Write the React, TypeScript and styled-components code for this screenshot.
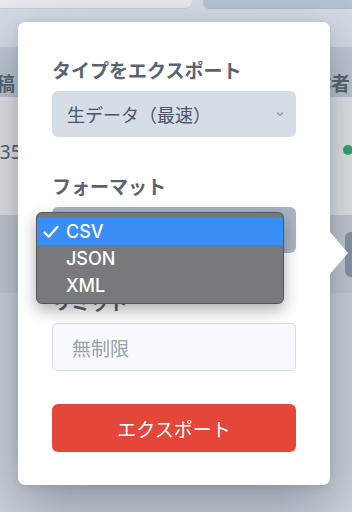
import React from "react";
import styled, { createGlobalStyle } from "styled-components";

const Global = createGlobalStyle`
  html, body { margin: 0; padding: 0; }
  body {
    background: #ccd3db;
    font-family: "Noto Sans CJK JP", "Noto Sans", sans-serif;
    overflow: hidden;
  }
`;

const Page = styled.div`
  position: relative;
  width: 352px;
  height: 512px;
  overflow: hidden;
  background: #cbd2da;
  display: flex;
  flex-direction: column;
`;

const Toolbar = styled.div`
  height: 9px;
  display: flex;
  align-items: flex-end;
  gap: 11px;
  overflow: hidden;
  background: #d3dbe3;
`;

const ToolButton = styled.div<{ $tone: "light" | "blue"; $w: number }>`
  flex: 0 0 ${(p) => p.$w}px;
  height: 40px;
  border-radius: ${(p) => (p.$tone === "light" ? "0 0 7px 0" : "0 0 0 7px")};
  background: ${(p) => (p.$tone === "light" ? "#e7e9ec" : "#b4c3d2")};
  border-bottom: 1px solid ${(p) => (p.$tone === "light" ? "#c9cfd6" : "#adbccb")};
`;

const Spacer = styled.div`
  height: 38px;
  background: #d3dbe3;
`;

const HeaderRow = styled.div`
  height: 50px;
  box-sizing: border-box;
  padding-top: 23px;
  background: #bec7d0;
  display: flex;
  align-items: flex-start;
  justify-content: space-between;
  font-size: 19px;
  line-height: 26px;
  font-weight: 700;
  color: #5a636e;
`;

const HeadCell = styled.span<{ $shift: number }>`
  margin-left: ${(p) => p.$shift}px;
  margin-right: 2px;
  white-space: nowrap;
`;

const Row = styled.div<{ $h: number; $bg: string; $pad: number }>`
  height: ${(p) => p.$h}px;
  box-sizing: border-box;
  padding-top: ${(p) => p.$pad}px;
  background: ${(p) => p.$bg};
  display: flex;
  align-items: flex-start;
  justify-content: space-between;
  font-size: 19px;
  line-height: 26px;
  color: #555d67;
`;

const Num = styled.span`
  margin-left: -11px;
  font-family: "Noto Sans", sans-serif;
`;

const Dot = styled.span`
  width: 10px;
  height: 10px;
  border-radius: 50%;
  background: #38a46c;
  margin-right: -1px;
  margin-top: 6px;
`;

const RowButton = styled.div`
  width: 30px;
  height: 45px;
  border-radius: 6px 0 0 6px;
  background: #8797a8;
  margin-right: -23px;
`;

const Rest = styled.div`
  flex: 1;
  background: #cdd4dc;
`;

const Popover = styled.div`
  position: absolute;
  left: 18px;
  top: 22px;
  width: 312px;
  box-sizing: border-box;
  padding: 35px 34px 33px;
  background: #ffffff;
  border-radius: 7px;
  box-shadow: 0 22px 60px rgba(40, 52, 70, 0.4), 0 2px 8px rgba(40, 52, 70, 0.12);
  display: flex;
  flex-direction: column;
  gap: 36px;
`;

const Arrow = styled.div`
  position: absolute;
  right: -18px;
  top: 210px;
  width: 0;
  height: 0;
  border-top: 21px solid transparent;
  border-bottom: 21px solid transparent;
  border-left: 18px solid #ffffff;
`;

const Field = styled.div`
  display: flex;
  flex-direction: column;
  gap: 8px;
`;

const Label = styled.div`
  font-size: 19px;
  line-height: 26px;
  font-weight: 700;
  color: #5a6371;
  white-space: nowrap;
`;

const SelectBox = styled.div<{ $active?: boolean }>`
  position: relative;
  height: 46px;
  box-sizing: border-box;
  padding: 0 12px 0 15px;
  border-radius: 6px;
  background: ${(p) => (p.$active ? "#a9b5c4" : "#d5dde6")};
  display: flex;
  align-items: center;
  justify-content: space-between;
  font-size: 18px;
  color: #4d5564;
`;

const Chevron = styled.svg`
  width: 8px;
  height: 6px;
`;

const Menu = styled.div`
  position: absolute;
  top: 5px;
  left: -16px;
  width: 248px;
  box-sizing: border-box;
  padding: 5px 0 4px;
  background: #77797d;
  border: 1px solid #55575b;
  border-radius: 6px;
  box-shadow: 0 6px 16px rgba(0, 0, 0, 0.32);
  display: flex;
  flex-direction: column;
  z-index: 2;
`;

const MenuItem = styled.div<{ $selected?: boolean }>`
  height: 27px;
  display: flex;
  align-items: center;
  padding-left: 6px;
  background: ${(p) => (p.$selected ? "#3b8ef6" : "transparent")};
  font-family: "Inter", "Noto Sans", sans-serif;
  font-size: 18px;
  font-weight: 500;
  color: #ffffff;
`;

const CheckSlot = styled.span`
  width: 23px;
  display: flex;
  align-items: center;
`;

const Input = styled.div`
  height: 48px;
  box-sizing: border-box;
  padding: 0 19px;
  border: 1px solid #d6dde6;
  border-radius: 5px;
  background: #f7f9fc;
  display: flex;
  align-items: center;
  font-size: 19px;
  color: #9aa2ad;
`;

const ExportButton = styled.div`
  margin-top: -3px;
  height: 48px;
  border-radius: 6px;
  background: #e4463a;
  color: #ffffff;
  font-size: 19px;
  display: flex;
  align-items: center;
  justify-content: center;
`;

export default function App() {
  return (
    <>
      <Global />
      <Page>
        <Toolbar>
          <ToolButton $tone="light" $w={192} />
          <ToolButton $tone="blue" $w={160} />
        </Toolbar>
        <Spacer />
        <HeaderRow>
          <HeadCell $shift={-23}>投稿</HeadCell>
          <HeadCell $shift={0}>作者</HeadCell>
        </HeaderRow>
        <Row $h={118} $bg="#e4e6e9" $pad={42}>
          <Num>135</Num>
          <Dot />
        </Row>
        <Row $h={78} $bg="#c5cbd2" $pad={17}>
          <span />
          <RowButton />
        </Row>
        <Rest />

        <Popover>
          <Arrow />
          <Field>
            <Label>タイプをエクスポート</Label>
            <SelectBox>
              <span>生データ（最速）</span>
              <Chevron viewBox="0 0 8 6">
                <path d="M1 1.5 L4 4.5 L7 1.5" fill="none" stroke="#8c95a1" strokeWidth="1.2" />
              </Chevron>
            </SelectBox>
          </Field>
          <Field>
            <Label>フォーマット</Label>
            <SelectBox $active>
              <span>CSV</span>
              <Menu>
                <MenuItem $selected>
                  <CheckSlot>
                    <svg width="16" height="14" viewBox="0 0 16 14">
                      <path d="M1.5 7.5 L5.8 11.8 L14.5 1.8" fill="none" stroke="#ffffff" strokeWidth="2.2" strokeLinecap="round" strokeLinejoin="round" />
                    </svg>
                  </CheckSlot>
                  CSV
                </MenuItem>
                <MenuItem>
                  <CheckSlot />
                  JSON
                </MenuItem>
                <MenuItem>
                  <CheckSlot />
                  XML
                </MenuItem>
              </Menu>
            </SelectBox>
          </Field>
          <Field>
            <Label>リミット</Label>
            <Input>無制限</Input>
          </Field>
          <ExportButton>エクスポート</ExportButton>
        </Popover>
      </Page>
    </>
  );
}
